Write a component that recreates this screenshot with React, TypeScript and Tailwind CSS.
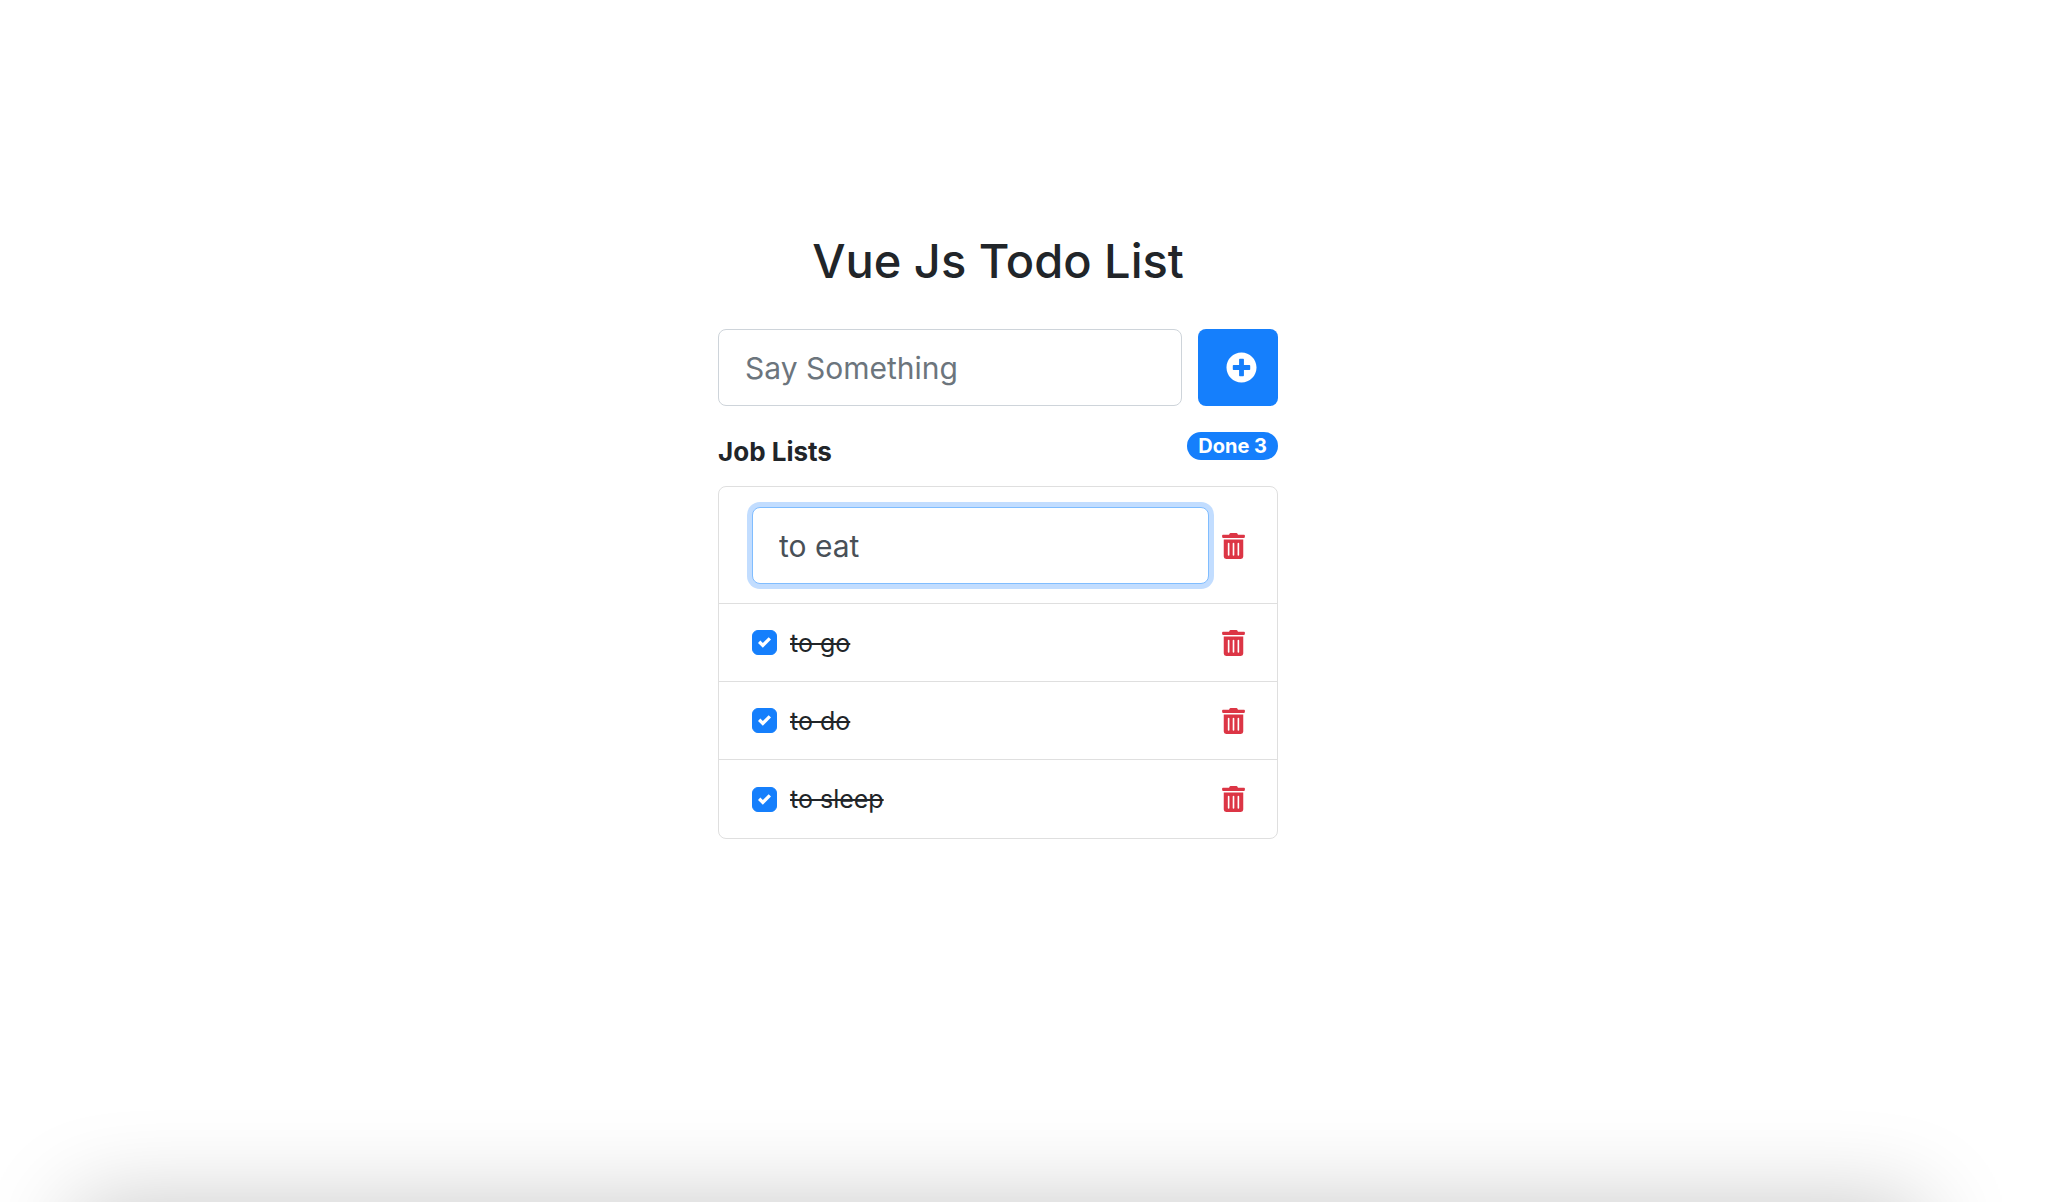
import { useState } from "react";
import { FaPlusCircle, FaTrashAlt } from "react-icons/fa";

type Job = { id: number; title: string; done: boolean; editing: boolean };

const initialJobs: Job[] = [
  { id: 1, title: "to eat", done: false, editing: true },
  { id: 2, title: "to go", done: true, editing: false },
  { id: 3, title: "to do", done: true, editing: false },
  { id: 4, title: "to sleep", done: true, editing: false },
];

function JobRow({
  job,
  onChange,
  onDelete,
}: {
  job: Job;
  onChange: (next: Job) => void;
  onDelete: () => void;
}) {
  return (
    <li
      className={
        job.editing
          ? "flex items-center gap-[13px] pt-5 pr-8 pb-[19px] pl-[33px]"
          : "flex h-[78px] items-center justify-between pr-8 pl-[33px]"
      }
    >
      {job.editing ? (
        <input
          type="text"
          aria-label="Edit job"
          value={job.title}
          onChange={(e) => onChange({ ...job, title: e.target.value })}
          className="h-[77px] min-w-0 flex-1 rounded-lg border border-[#80bdff] bg-white px-[26px] text-[30px] text-[#495057] outline-none ring-[5px] ring-[#c2ddff]"
        />
      ) : (
        <label className="flex items-center gap-[13px]">
          <span className="grid size-[25px] place-items-center">
            <input
              type="checkbox"
              checked={job.done}
              onChange={(e) => onChange({ ...job, done: e.target.checked })}
              className="peer col-start-1 row-start-1 size-[25px] appearance-none rounded-md border border-[#adb5bd] checked:border-[#157ffc] checked:bg-[#157ffc]"
            />
            <svg
              viewBox="0 0 8 8"
              className="pointer-events-none invisible col-start-1 row-start-1 size-[13px] fill-white peer-checked:visible"
            >
              <path d="M6.564.75l-3.59 3.612-1.538-1.55L0 4.26l2.974 2.99L8 2.193z" />
            </svg>
          </span>
          <span className={job.done ? "text-[25px] leading-9 line-through" : "text-[25px] leading-9"}>
            {job.title}
          </span>
        </label>
      )}
      <button type="button" aria-label={`Delete ${job.title}`} onClick={onDelete} className="text-[#dc3545]">
        <FaTrashAlt className="h-[26px] w-[23px]" />
      </button>
    </li>
  );
}

export default function App() {
  const [jobs, setJobs] = useState(initialJobs);
  const [text, setText] = useState("");

  const addJob = (e: React.FormEvent) => {
    e.preventDefault();
    if (!text.trim()) return;
    setJobs([...jobs, { id: Date.now(), title: text.trim(), done: false, editing: false }]);
    setText("");
  };

  return (
    <div className="relative min-h-screen overflow-hidden bg-white pr-[75px] font-['Inter',sans-serif] text-[#212529]">
      <main className="mx-auto w-full max-w-[560px] pt-[229px]">
        <h1 className="text-center text-[47px] leading-[64px] font-medium">Vue Js Todo List</h1>

        <form onSubmit={addJob} className="mt-9 flex gap-4">
          <input
            type="text"
            aria-label="New job"
            placeholder="Say Something"
            value={text}
            onChange={(e) => setText(e.target.value)}
            className="h-[77px] min-w-0 flex-1 rounded-lg border border-[#ced4da] bg-white px-[26px] text-[30px] outline-none placeholder:text-[#6c757d]"
          />
          <button
            type="submit"
            aria-label="Add job"
            className="flex w-20 items-center justify-center rounded-lg bg-[#157ffc] pl-1.5 text-white"
          >
            <FaPlusCircle className="size-[31px]" />
          </button>
        </form>

        <div className="mt-[26px] flex items-start justify-between">
          <h2 className="pt-[2px] text-[26px] leading-9 font-bold">Job Lists</h2>
          <span className="rounded-full bg-[#157ffc] px-[11px] text-[20px] leading-7 font-bold text-white">
            Done {jobs.filter((job) => job.done).length}
          </span>
        </div>

        <ul className="mt-4 divide-y divide-[#dfdfdf] rounded-lg border border-[#dfdfdf]">
          {jobs.map((job) => (
            <JobRow
              key={job.id}
              job={job}
              onChange={(next) => setJobs(jobs.map((j) => (j.id === next.id ? next : j)))}
              onDelete={() => setJobs(jobs.filter((j) => j.id !== job.id))}
            />
          ))}
        </ul>
      </main>

      <div
        aria-hidden="true"
        className="pointer-events-none absolute top-full right-[150px] left-[75px] h-60 shadow-[0_0_92px_rgba(0,0,0,0.22)]"
      />
    </div>
  );
}
